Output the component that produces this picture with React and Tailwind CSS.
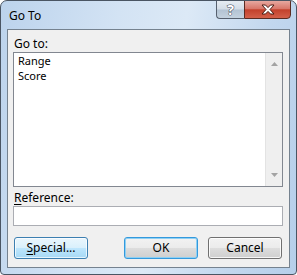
import React from "react";

const font = { fontFamily: '"Segoe UI", "Noto Sans", sans-serif' };

function HelpGlyph() {
  return (
    <span className="text-[14px] font-bold leading-none text-white [-webkit-text-stroke:1px_#3a4350] [paint-order:stroke_fill]">
      ?
    </span>
  );
}

function CloseGlyph() {
  return (
    <svg width="14" height="11" viewBox="0 0 14 11">
      <path
        d="M1 1 H4.5 L7 3.6 L9.5 1 H13 L9 5.5 L13 10 H9.5 L7 7.4 L4.5 10 H1 L5 5.5 Z"
        fill="#ffffff"
        stroke="#4a1c14"
        strokeWidth="1"
        strokeLinejoin="round"
      />
    </svg>
  );
}

export default function App() {
  return (
    <div
      className="w-[297px] h-[275px] rounded-t-[7px] rounded-b-[4px] border border-[#4a5563] bg-[linear-gradient(100deg,#bcd3ec_0%,#d3e3f4_35%,#dce9f6_55%,#c2d7ee_80%,#b6cfea_100%)] flex flex-col overflow-hidden text-[12px] text-black"
      style={font}
    >
      {/* title bar */}
      <div className="h-[28px] flex items-start shrink-0">
        <div className="pl-[8px] pt-[7px] text-[12px] leading-[15px] text-black">Go To</div>
        <div className="ml-auto mr-[5px] flex">
          <div className="w-[28px] h-[19px] -mt-px border border-[#56606e] border-r-0 rounded-bl-[4px] bg-[linear-gradient(180deg,#e6ecf2_0%,#d4dde7_48%,#b3c3d3_52%,#c4d2df_100%)] flex items-center justify-center">
            <HelpGlyph />
          </div>
          <div className="w-[47px] h-[19px] -mt-px border border-[#5b2b22] rounded-br-[4px] bg-[linear-gradient(180deg,#e7a8a0_0%,#d8776a_45%,#c3412c_52%,#d3604a_100%)] flex items-center justify-center">
            <CloseGlyph />
          </div>
        </div>
      </div>

      {/* client area */}
      <div className="mx-[6px] h-[239px] border border-[#75828f] bg-[#f0f0f0] flex flex-col shrink-0">
        <div className="pl-[6px] pt-[6px] leading-[15px]">Go to:</div>
        <div className="ml-[5px] mt-[1px] w-[270px] h-[135px] border border-[#828790] bg-white flex">
          <div className="flex-1 pl-[4px] pt-0 text-[11px] leading-[15px]">
            <div>Range</div>
            <div>Score</div>
          </div>
          <div className="w-[17px] bg-[#efefef] border-l border-[#e3e3e3] flex flex-col justify-between items-center py-[9px]">
            <svg width="7" height="4" viewBox="0 0 7 4">
              <path d="M0 4 L3.5 0 L7 4 Z" fill="#a3a3a3" />
            </svg>
            <svg width="7" height="4" viewBox="0 0 7 4">
              <path d="M0 0 L3.5 4 L7 0 Z" fill="#a3a3a3" />
            </svg>
          </div>
        </div>
        <div className="pl-[6px] mt-[3px] leading-[15px]">
          <span className="underline underline-offset-2">R</span>eference:
        </div>
        <div className="ml-[5px] mt-[1px] w-[270px] h-[20px] border border-[#abadb3] bg-white" />
        <div className="mt-[11px] pl-[6px] flex">
          <button className="w-[74px] h-[22px] rounded-[3px] border border-[#3c7fb1] bg-[linear-gradient(180deg,#eaf6fd_0%,#d9f0fc_50%,#bee6fd_50%,#a7d9f5_100%)] shadow-[inset_0_0_0_1px_rgba(255,255,255,0.7)] leading-none">
            <span className="underline underline-offset-2">S</span>pecial...
          </button>
          <button className="ml-[36px] w-[74px] h-[22px] rounded-[3px] border border-[#3399dd] bg-[linear-gradient(180deg,#f2f2f2_0%,#ebebeb_50%,#dddddd_50%,#cfcfcf_100%)] shadow-[inset_0_0_0_1px_#8fd0f3] leading-none">
            OK
          </button>
          <button className="ml-[10px] w-[74px] h-[22px] rounded-[3px] border border-[#707070] bg-[linear-gradient(180deg,#f2f2f2_0%,#ebebeb_50%,#dddddd_50%,#cfcfcf_100%)] shadow-[inset_0_0_0_1px_rgba(255,255,255,0.8)] leading-none">
            Cancel
          </button>
        </div>
      </div>
    </div>
  );
}
